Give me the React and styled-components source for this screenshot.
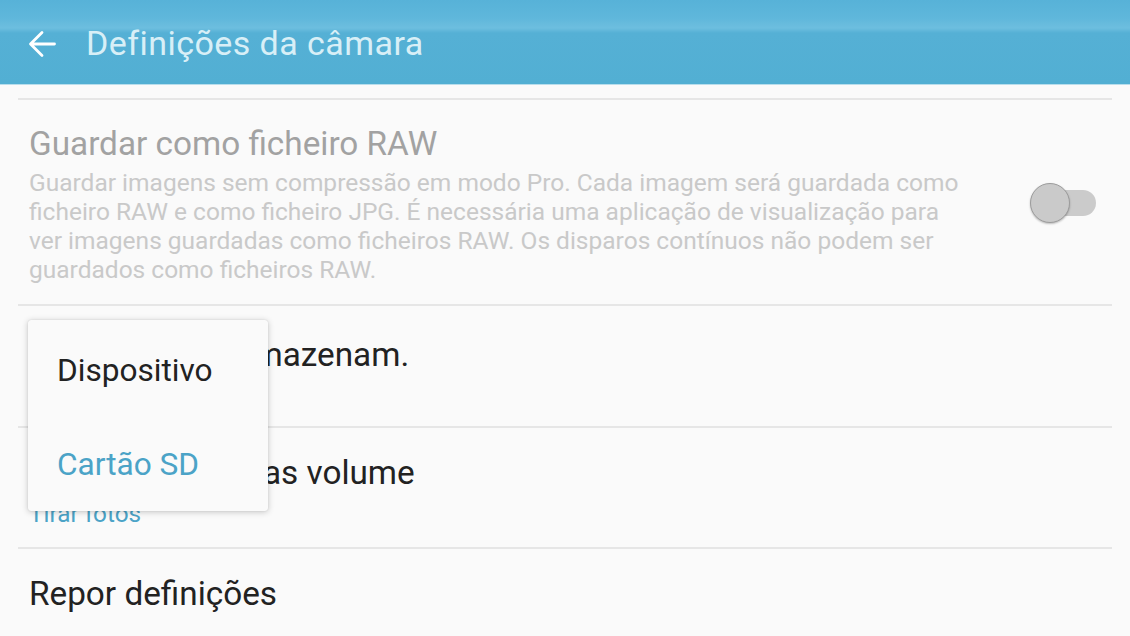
import React from 'react'
import styled, { createGlobalStyle } from 'styled-components';

const GlobalStyle = createGlobalStyle`
  html, body {
    margin: 0;
    padding: 0;
    background: #fafafa;
    font-family: Roboto, "Noto Sans", sans-serif;
  }
`;

const Page = styled.div`
  position: relative;
  width: 1130px;
  height: 636px;
  overflow: hidden;
  background: #fafafa;
`;

const Header = styled.header`
  height: 85px;
  display: flex;
  align-items: center;
  gap: 30px;
  padding: 1px 0 0 28px;
  box-sizing: border-box;
  background: linear-gradient(
    to bottom,
    #57b2d8 0px,
    #5fb7db 18px,
    #6dbedf 28px,
    #55b0d5 33px,
    #52afd3 100%
  );
  border-bottom: 1px solid #b9deec;
`;

const BackButton = styled.button`
  border: 0;
  padding: 0;
  background: none;
  width: 28px;
  height: 28px;
  display: flex;
  margin-top: 2px;
`;

const Title = styled.h1`
  margin: 0;
  font-size: 34px;
  font-weight: 400;
  color: #d8eff7;
  letter-spacing: 0.45px;
`;

const List = styled.div`
  margin: 13px 18px 0;
`;

const Row = styled.div`
  display: flex;
  align-items: flex-start;
  border-top: 2px solid #e6e6e6;
  padding: ${p => p.$pad || '24px 0 20px 11px'};
  min-height: ${p => p.$h || 'auto'};
  box-sizing: border-box;
`;

const RowText = styled.div`
  flex: 1;
`;

const RowTitle = styled.div`
  font-size: 33.3px;
  line-height: 40px;
  white-space: nowrap;
  color: ${p => (p.$disabled ? '#a2a2a2' : '#222222')};
`;

const RowDesc = styled.div`
  font-size: 24.5px;
  line-height: 29px;
  margin-top: 4px;
  white-space: nowrap;
  color: #c9c9c9;
`;

const RowSub = styled.div`
  font-size: 24.3px;
  line-height: 29px;
  margin-top: 6px;
  color: #4ba3c7;
`;

const Switch = styled.div`
  position: relative;
  align-self: center;
  flex: none;
  width: 66px;
  height: 42px;
  margin: 0 16px 2px 0;
`;

const Track = styled.div`
  position: absolute;
  left: 16px;
  right: 0;
  top: 8px;
  height: 26px;
  border-radius: 13px;
  background: #cbcbcb;
`;

const Thumb = styled.div`
  position: absolute;
  left: 0;
  top: 1px;
  width: 38px;
  height: 38px;
  border-radius: 50%;
  background: #cacaca;
  border: 1px solid #9c9c9c;
  box-shadow: 0 1px 2px rgba(0, 0, 0, 0.25);
`;

const Menu = styled.div`
  position: absolute;
  left: 28px;
  top: 320px;
  width: 240px;
  padding-top: 3px;
  background: #fafafa;
  border-radius: 3px;
  box-shadow: 0 1px 6px rgba(0, 0, 0, 0.22), 0 0 1px rgba(0, 0, 0, 0.2);
`;

const MenuItem = styled.div`
  height: 94px;
  display: flex;
  align-items: center;
  padding-left: 29px;
  font-size: 31.6px;
  color: ${p => (p.$active ? '#4ba3c7' : '#222222')};
`;

const BackArrow = () => (
  <svg width="28" height="28" viewBox="0 0 28 28" fill="none">
    <path
      d="M26.5 14H3M14 2.5L2.5 14L14 25.5"
      stroke="#ffffff"
      strokeWidth="2.8"
      strokeLinecap="round"
      strokeLinejoin="round"
    />
  </svg>
);

const App = () => (
  <>
    <GlobalStyle />
    <Page>
      <Header>
        <BackButton aria-label="Voltar">
          <BackArrow />
        </BackButton>
        <Title>Definições da câmara</Title>
      </Header>
      <List>
        <Row $pad="24px 0 20px 11px">
          <RowText>
            <RowTitle $disabled>Guardar como ficheiro RAW</RowTitle>
            <RowDesc>
              Guardar imagens sem compressão em modo Pro. Cada imagem será guardada como<br />
              ficheiro RAW e como ficheiro JPG. É necessária uma aplicação de visualização para<br />
              ver imagens guardadas como ficheiros RAW. Os disparos contínuos não podem ser<br />
              guardados como ficheiros RAW.
            </RowDesc>
          </RowText>
          <Switch>
            <Track />
            <Thumb />
          </Switch>
        </Row>
        <Row $pad="29px 0 0 11px" $h="122px">
          <RowText>
            <RowTitle>Local que se armazenam.</RowTitle>
            <RowSub>Cartão SD</RowSub>
          </RowText>
        </Row>
        <Row $pad="25px 0 0 11px" $h="121px">
          <RowText>
            <RowTitle>Função das teclas volume</RowTitle>
            <RowSub>Tirar fotos</RowSub>
          </RowText>
        </Row>
        <Row $pad="25px 0 20px 11px">
          <RowText>
            <RowTitle>Repor definições</RowTitle>
          </RowText>
        </Row>
      </List>
      <Menu>
        <MenuItem>Dispositivo</MenuItem>
        <MenuItem $active>Cartão SD</MenuItem>
      </Menu>
    </Page>
  </>
);

export default App;
